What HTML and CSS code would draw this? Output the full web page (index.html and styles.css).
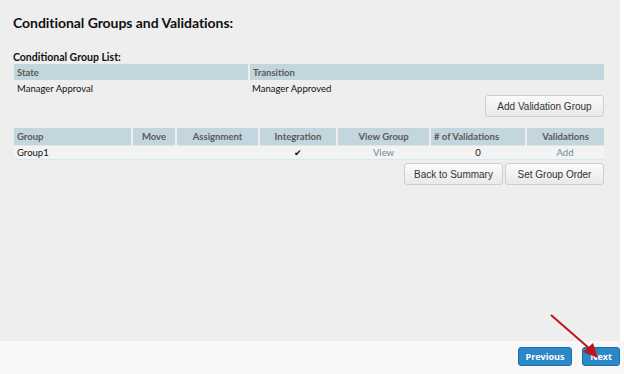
FILE: index.html
```html
<!DOCTYPE html>
<html lang="en">
<head>
    <meta charset="UTF-8">
    <title>Conditional Groups and Validations</title>
    <link rel="stylesheet" href="styles.css">
</head>
<body>
    <div class="main">
        <h1 class="title">Conditional Groups and Validations:</h1>

        <h2 class="subtitle">Conditional Group List:</h2>
        <table class="grid states">
            <tr>
                <th class="col-state">State</th>
                <th>Transition</th>
            </tr>
            <tr>
                <td>Manager Approval</td>
                <td>Manager Approved</td>
            </tr>
        </table>
        <div class="actions">
            <button class="btn wide">Add Validation Group</button>
        </div>

        <table class="grid groups">
            <tr>
                <th class="c-group">Group</th>
                <th class="c-move center">Move</th>
                <th class="c-assign center">Assignment</th>
                <th class="c-integ center">Integration</th>
                <th class="c-view center">View Group</th>
                <th class="c-count"># of Validations</th>
                <th class="c-valid center">Validations</th>
            </tr>
            <tr class="row">
                <td>Group1</td>
                <td></td>
                <td></td>
                <td class="center check">&#10004;</td>
                <td class="center"><a href="#" class="link">View</a></td>
                <td class="center">0</td>
                <td class="center"><a href="#" class="link">Add</a></td>
            </tr>
        </table>
        <div class="actions tight">
            <button class="btn">Back to Summary</button>
            <button class="btn">Set Group Order</button>
        </div>
    </div>

    <div class="footer">
        <button class="nav prev">Previous</button>
        <button class="nav next">Next</button>
        <svg class="arrow" width="60" height="54" viewBox="0 0 60 54">
            <line x1="3" y1="3" x2="42" y2="37" stroke="#c0141b" stroke-width="2"/>
            <polygon points="50,46 35,40 45,31" fill="#c0141b"/>
        </svg>
    </div>
</body>
</html>
```

FILE: styles.css
```css
/* reset */
html, body {
    margin: 0;
    padding: 0;
}
body {
    width: 624px;
    height: 374px;
    background: #ffffff;
    font-family: Lato, "Open Sans", sans-serif;
    color: #111111;
    overflow: hidden;
    position: relative;
}

/* content area */
.main {
    width: 620px;
    height: 341px;
    box-sizing: border-box;
    background: #eeeeee;
    padding: 13px 20px 0 13px;
}
.title {
    margin: 0 0 18px 0;
    font-size: 14px;
    font-weight: bold;
    line-height: 20px;
    letter-spacing: -0.05px;
}
.subtitle {
    margin: 0;
    font-size: 10.5px;
    font-weight: bold;
    line-height: 13px;
}

/* tables */
.grid {
    width: 590px;
    margin-left: 1px;
    border-collapse: collapse;
    font-size: 9.5px;
}
.grid th {
    background: #c3d5dd;
    color: #5a5a5a;
    text-align: left;
    font-weight: bold;
    height: 16px;
    padding: 0 3px;
    border-left: 2px solid #eeeeee;
}
.grid th:first-child {
    border-left: 0;
}
.grid td {
    height: 16px;
    padding: 0 3px;
    color: #111111;
}
.grid .center {
    text-align: center;
}
.col-state {
    width: 228px;
}

.groups {
    margin-top: 11px;
}
.groups th {
    height: 17px;
}
.groups .row td {
    background: #f3f3f3;
    border-top: 1px solid #dde6ea;
    border-bottom: 1px solid #dde6ea;
    height: 13px;
}
.c-group { width: 111px; }
.c-move { width: 36px; }
.c-assign { width: 75px; }
.c-integ { width: 70px; }
.c-view { width: 85px; }
.c-count { width: 88px; }
.link {
    color: #6f8a9a;
    text-decoration: none;
}
.check {
    font-size: 9px;
}

/* buttons */
.actions {
    display: flex;
    justify-content: flex-end;
    gap: 2px;
    width: 591px;
    margin-top: -1px;
}
.actions.tight {
    margin-top: 3px;
}
.btn {
    width: 99px;
    height: 22px;
    padding: 0;
    border: 1px solid #cfcfcf;
    border-radius: 3px;
    background: linear-gradient(#fafafa, #e9e9e9);
    font-family: "Liberation Sans", Arial, sans-serif;
    font-size: 10px;
    color: #333333;
}
.btn.wide {
    width: 119px;
}

/* footer */
.footer {
    height: 33px;
    background: #f7f7f7;
    display: flex;
    justify-content: flex-end;
    align-items: flex-start;
    gap: 10px;
    padding: 6px 4px 0 0;
    box-sizing: border-box;
    width: 624px;
}
.nav {
    height: 19px;
    padding: 0;
    border: 1px solid #1d6fa8;
    border-radius: 3px;
    background: #2b88c8;
    color: #ffffff;
    font-family: "Open Sans", "Liberation Sans", sans-serif;
    font-size: 9px;
    font-weight: bold;
}
.prev { width: 54px; }
.next { width: 38px; }

/* annotation arrow */
.arrow {
    position: absolute;
    left: 548px;
    top: 312px;
}
```
